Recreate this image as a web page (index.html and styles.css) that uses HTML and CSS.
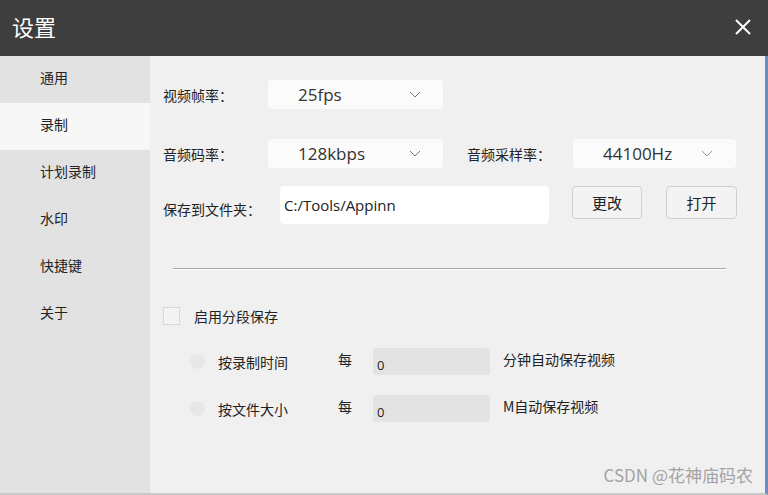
FILE: index.html
```html
<!DOCTYPE html>
<html>
  <head>
    <meta charset="utf-8">
    <link rel="stylesheet" href="styles.css">
  </head>
  <body>
    <div class="window">
      <div class="titlebar">
        <span class="title">设置</span>
        <svg class="close" width="18" height="18" viewBox="0 0 18 18">
          <path d="M2 2 L16 16 M16 2 L2 16" stroke="#fff" stroke-width="2" fill="none"/>
        </svg>
      </div>
      <div class="main">
        <div class="sidebar">
          <div class="nav-item">通用</div>
          <div class="nav-item active">录制</div>
          <div class="nav-item">计划录制</div>
          <div class="nav-item">水印</div>
          <div class="nav-item">快捷键</div>
          <div class="nav-item">关于</div>
        </div>
        <div class="content">
          <div class="row row-1">
            <span class="label">视频帧率：</span>
            <div class="select">
              <span>25fps</span>
              <svg class="chevron" width="12" height="7" viewBox="0 0 12 7"><path d="M1 1 L6 6 L11 1" stroke="#777" stroke-width="1" fill="none"/></svg>
            </div>
          </div>
          <div class="row row-2">
            <span class="label">音频码率：</span>
            <div class="select">
              <span>128kbps</span>
              <svg class="chevron" width="12" height="7" viewBox="0 0 12 7"><path d="M1 1 L6 6 L11 1" stroke="#777" stroke-width="1" fill="none"/></svg>
            </div>
            <span class="label label-rate">音频采样率：</span>
            <div class="select select-small">
              <span>44100Hz</span>
              <svg class="chevron" width="12" height="7" viewBox="0 0 12 7"><path d="M1 1 L6 6 L11 1" stroke="#999" stroke-width="1" fill="none"/></svg>
            </div>
          </div>
          <div class="row row-3">
            <span class="label label-folder">保存到文件夹：</span>
            <div class="path-input">C:/Tools/Appinn</div>
            <button class="btn">更改</button>
            <button class="btn btn-open">打开</button>
          </div>
          <div class="divider"></div>
          <div class="check-row">
            <span class="checkbox"></span>
            <span>启用分段保存</span>
          </div>
          <div class="seg-row seg-first">
            <span class="radio"></span>
            <span class="seg-label">按录制时间</span>
            <span class="every">每</span>
            <div class="num-input">0</div>
            <span class="suffix">分钟自动保存视频</span>
          </div>
          <div class="seg-row">
            <span class="radio"></span>
            <span class="seg-label">按文件大小</span>
            <span class="every">每</span>
            <div class="num-input">0</div>
            <span class="suffix">M自动保存视频</span>
          </div>
          <div class="watermark">CSDN @花神庙码农</div>
        </div>
      </div>
    </div>
  </body>
</html>
```

FILE: styles.css
```css
body {
  margin: 0;
  background: #f0f0f0;
  font-family: "Noto Sans CJK SC", "Noto Sans", sans-serif;
  color: #222;
}
.window {
  width: 768px;
  height: 495px;
  display: flex;
  flex-direction: column;
  overflow: hidden;
}
.titlebar {
  height: 56px;
  flex: none;
  background: #3e3e3e;
  display: flex;
  align-items: center;
  justify-content: space-between;
  padding: 0 16px 0 12px;
}
.title {
  color: #fff;
  font-size: 22px;
  margin-top: -4px;
}
.close {
  margin-top: -2px;
}
.main {
  flex: 1;
  display: flex;
  border-right: 3px solid #6b8cc8;
  border-bottom: 2px solid #c9c9c9;
}
.sidebar {
  width: 150px;
  flex: none;
  background: #e2e2e2;
}
.nav-item {
  height: 47px;
  line-height: 43px;
  padding-left: 40px;
  font-size: 14px;
  color: #222;
}
.nav-item.active {
  background: #f7f7f7;
}
.content {
  flex: 1;
  position: relative;
  background: #f0f0f0;
  padding: 24px 0 0 13px;
}
.row {
  display: flex;
  align-items: center;
}
.label {
  width: 105px;
  flex: none;
  font-size: 14px;
}
.row-2 {
  margin-top: 30px;
}
.row-3 {
  margin-top: 18px;
  align-items: flex-start;
}
.select {
  width: 175px;
  height: 29px;
  background: #fbfbfb;
  border-radius: 4px;
  display: flex;
  align-items: center;
  font-family: "Open Sans", "Noto Sans", sans-serif;
  font-size: 17px;
  color: #333;
  box-sizing: border-box;
  padding-left: 30px;
  position: relative;
}
.select .chevron {
  position: absolute;
  right: 22px;
  top: 11px;
}
.select-small {
  width: 163px;
  padding-left: 30px;
}
.select-small .chevron {
  right: 23px;
}
.label-rate {
  margin-left: 24px;
  width: 106px;
}
.label-folder {
  width: 117px;
  line-height: 46px;
}
.path-input {
  width: 269px;
  height: 38px;
  background: #fff;
  border-radius: 4px;
  box-sizing: border-box;
  padding-left: 4px;
  line-height: 38px;
  font-family: "Open Sans", "Noto Sans", sans-serif;
  font-size: 15px;
  color: #222;
}
.btn {
  width: 70px;
  height: 33px;
  margin-left: 23px;
  background: #f3f3f3;
  border: 1px solid #cfcfcf;
  border-radius: 4px;
  font-family: "Noto Sans CJK SC", sans-serif;
  font-size: 15px;
  color: #222;
  padding: 0;
}
.btn-open {
  width: 71px;
  margin-left: 24px;
}
.divider {
  width: 553px;
  margin: 36px 0 0 10px;
  height: 1px;
  background: #a9a9a9;
  border-bottom: 1px solid #fafafa;
}
.check-row {
  display: flex;
  align-items: center;
  margin-top: 36px;
  font-size: 14px;
}
.checkbox {
  width: 15px;
  height: 16px;
  border: 1px solid #d8d8d8;
  background: #f3f3f3;
  margin-right: 14px;
}
.seg-row {
  display: flex;
  align-items: center;
  height: 27px;
  margin-top: 20px;
  font-size: 14px;
}
.seg-first {
  margin-top: 22px;
}
.radio {
  width: 15px;
  height: 15px;
  border-radius: 50%;
  background: #e7e7e7;
  margin-left: 27px;
  margin-right: 13px;
}
.seg-label {
  width: 120px;
}
.every {
  width: 35px;
  margin-top: -6px;
}
.num-input {
  width: 117px;
  height: 27px;
  background: #e3e3e3;
  border-radius: 3px;
  box-sizing: border-box;
  padding: 4px 0 0 4px;
  line-height: 27px;
  font-family: "Open Sans", "Noto Sans", sans-serif;
  font-size: 13px;
}
.suffix {
  margin-left: 13px;
  margin-top: -6px;
}
.watermark {
  position: absolute;
  right: 12px;
  bottom: 6px;
  font-size: 17px;
  color: #a3a3a3;
}
```
